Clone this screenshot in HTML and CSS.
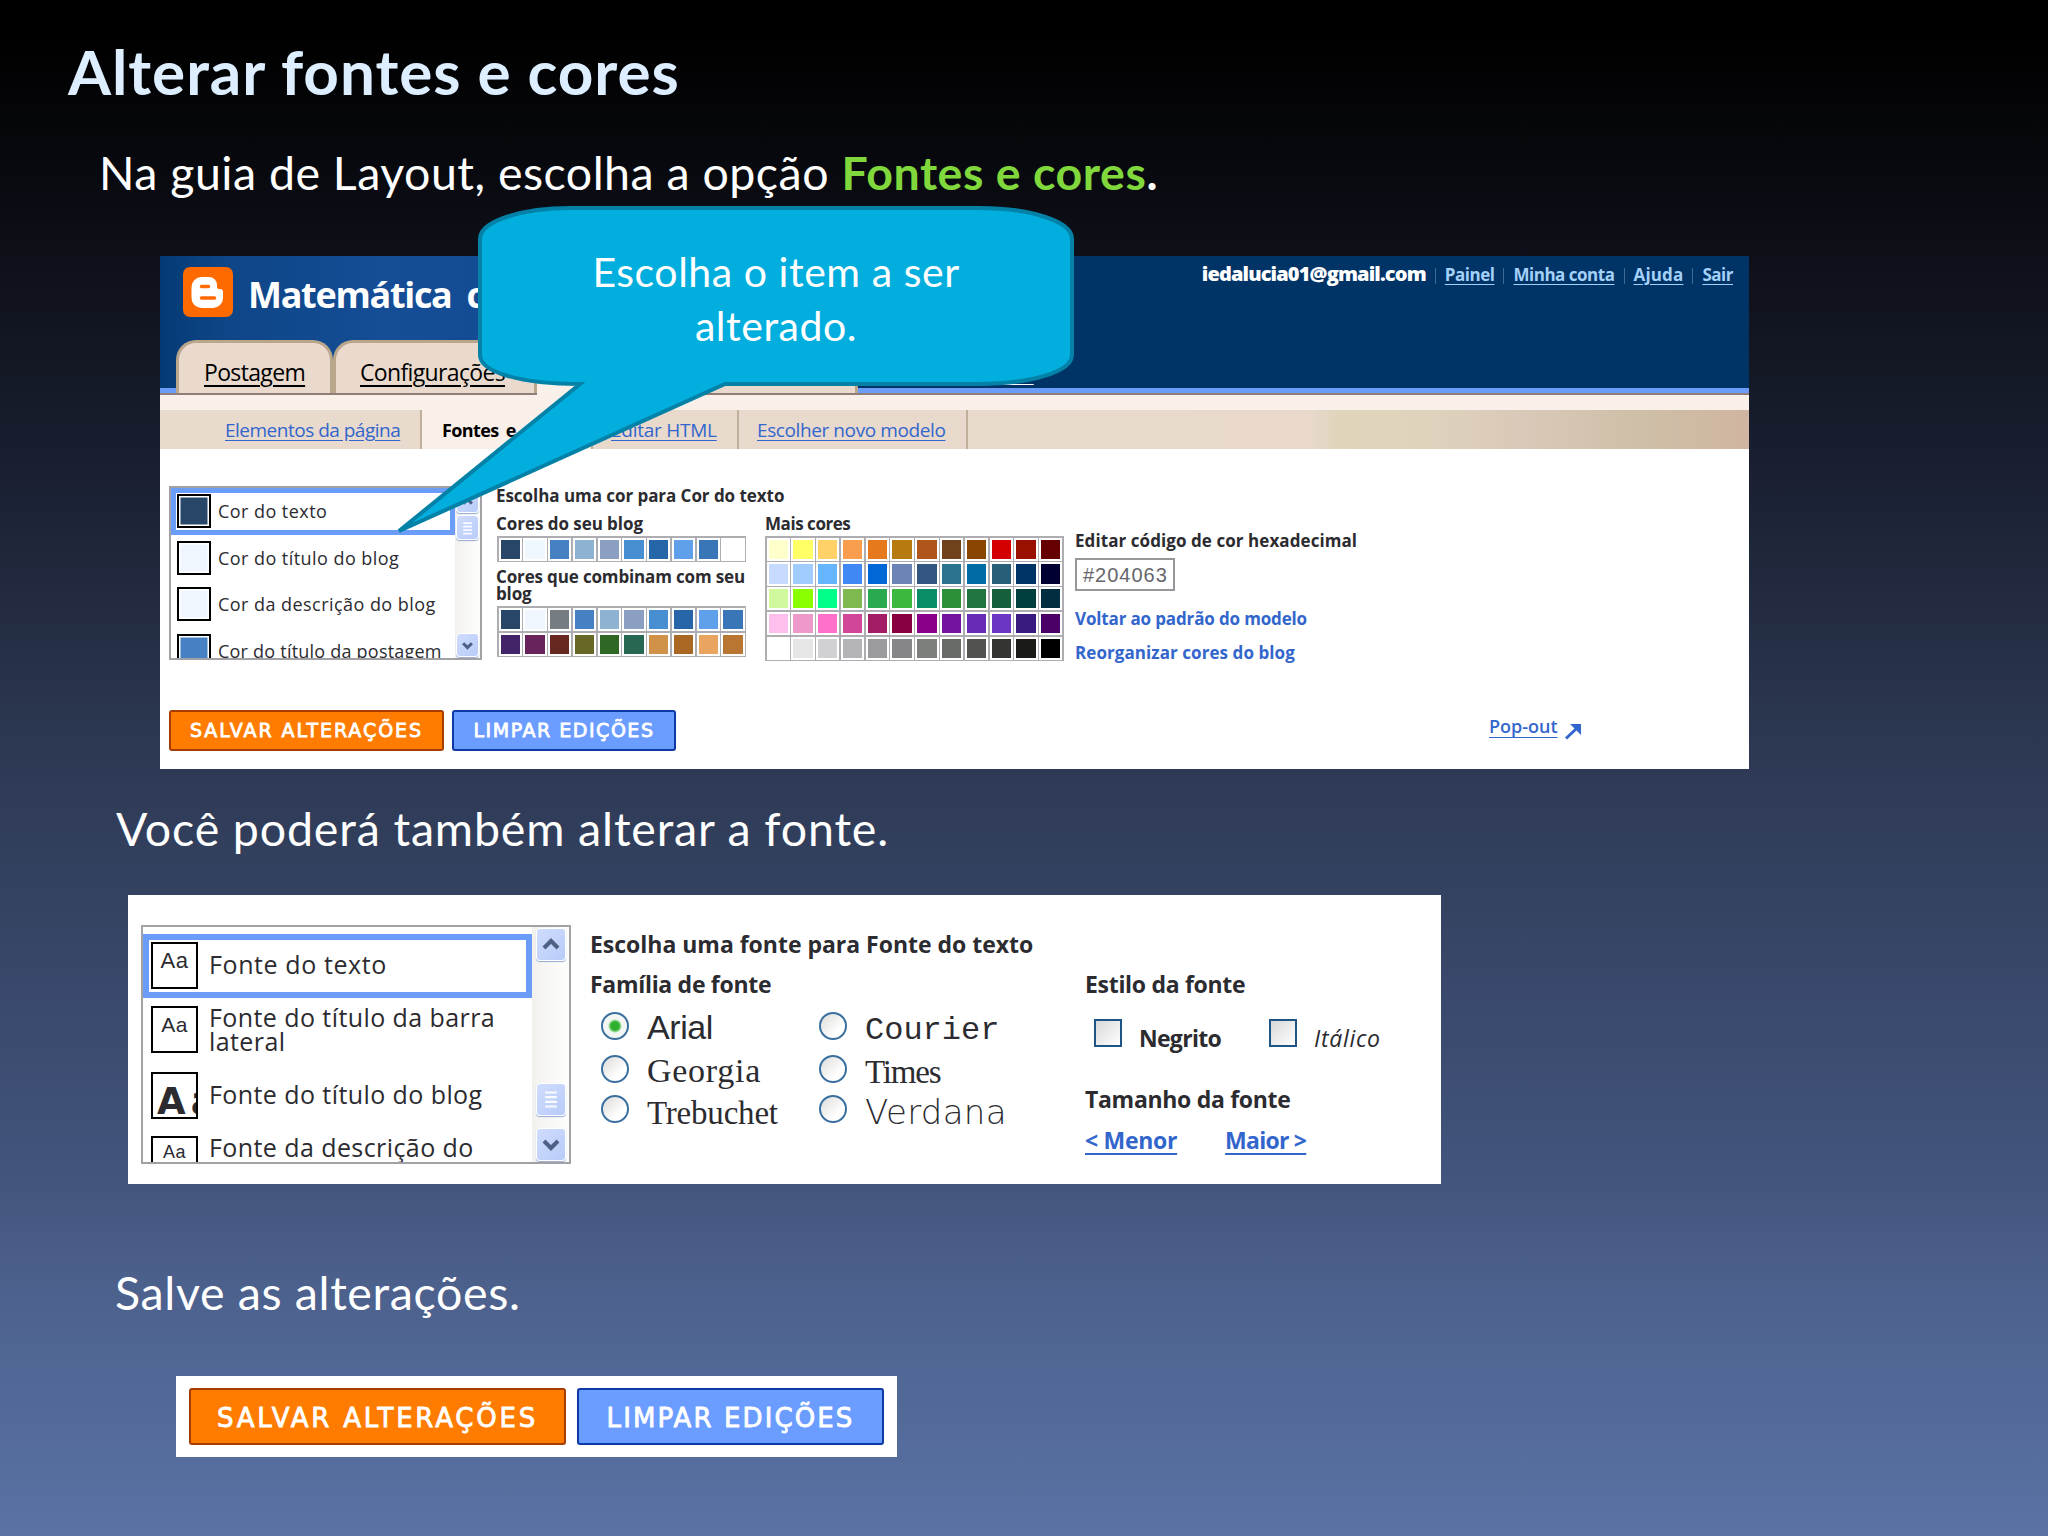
FILE: index.html
```html
<!DOCTYPE html>
<html lang="pt-BR">
<head>
<meta charset="utf-8">
<title>Alterar fontes e cores</title>
<link rel="stylesheet" href="styles.css">
</head>
<body>
<main class="slide">
  <h1 class="title">Alterar fontes e cores</h1>
  <p class="lead intro">Na guia de Layout, escolha a opção <b><em>Fontes e cores</em>.</b></p>

  <section class="panel blogger">
    <header class="top">
      <div class="brand-row">
        <svg class="logo" viewBox="0 0 50 50"><rect width="50" height="50" rx="7" fill="#ff6a00"/><path d="M18 10h8a8 8 0 0 1 8 8v2q0 2 3 2t3 3v6a10 10 0 0 1-10 10H18.500a10 10 0 0 1-10-10V20a10 10 0 0 1 10-10z" fill="#fff"/><path d="M18.500 19.500h7M18.500 31h13" stroke="#ff6a00" stroke-width="3.500" stroke-linecap="round"/></svg>
        <span class="blog-name">Matemática c</span>
        <nav class="user"><b>iedalucia01@gmail.com</b><i></i><a>Painel</a><i></i><a>Minha conta</a><i></i><a class="help">Ajuda</a><i></i><a>Sair</a></nav>
      </div>
      <nav class="tabs">
        <a class="tab t1">Postagem</a><a class="tab t2">Configurações</a><a class="tab active"></a><a class="tab t4"></a><a class="view">Visualizar</a>
      </nav>
    </header>
    <nav class="subnav">
      <a class="s1"><span>Elementos da página</span></a><a class="s2"><b>Fontes e cores</b></a><a class="s3"><span>Editar HTML</span></a><a class="s4"><span>Escolher novo modelo</span></a>
    </nav>
    <div class="editor">
      <div class="list colors">
        <ul>
          <li class="sel"><i class="sw navy"></i><span>Cor do texto</span></li>
          <li><i class="sw pale"></i><span>Cor do título do blog</span></li>
          <li><i class="sw pale"></i><span>Cor da descrição do blog</span></li>
          <li><i class="sw blue"></i><span>Cor do título da postagem</span></li>
        </ul>
        <div class="bar">
          <svg class="btn" viewBox="0 0 24 24"><path d="M7 15l5-5 5 5"/></svg>
          <svg class="btn thumb" viewBox="0 0 24 26"><path d="M7 8h10M7 12h10M7 16h10M7 20h10"/></svg>
          <svg class="btn down" viewBox="0 0 24 24"><path d="M7 10l5 5 5-5"/></svg>
        </div>
      </div>
      <div class="pick">
        <h2>Escolha uma cor para Cor do texto</h2>
        <div class="cols">
          <div class="mine">
            <h3>Cores do seu blog</h3>
            <div class="grid ten">
              <i style="background:#284668"></i><i style="background:#f0f8ff"></i><i style="background:#4581c3"></i><i style="background:#8eb2d2"></i><i style="background:#8b9fc3"></i><i style="background:#478fd1"></i><i style="background:#2666a8"></i><i style="background:#609fea"></i><i style="background:#3876b8"></i><i style="background:#fff"></i>
            </div>
            <h3 class="wrap">Cores que combinam com seu<br>blog</h3>
            <div class="grid ten">
              <i style="background:#284668"></i><i style="background:#f0f6ff"></i><i style="background:#757d83"></i><i style="background:#4581c3"></i><i style="background:#8eb2d2"></i><i style="background:#8b9fc3"></i><i style="background:#478fd1"></i><i style="background:#2666a8"></i><i style="background:#609fea"></i><i style="background:#3876b8"></i>
              <i style="background:#432469"></i><i style="background:#68245a"></i><i style="background:#672822"></i><i style="background:#686826"></i><i style="background:#2f6824"></i><i style="background:#286852"></i><i style="background:#d09148"></i><i style="background:#a86824"></i><i style="background:#e9a55f"></i><i style="background:#b87632"></i>
            </div>
          </div>
          <div class="more">
            <h3>Mais cores</h3>
            <div class="grid twelve">
              <i style="background:#ffffcc"></i><i style="background:#ffff66"></i><i style="background:#ffd166"></i><i style="background:#f99d4f"></i><i style="background:#e6781e"></i><i style="background:#b57b10"></i><i style="background:#b0561d"></i><i style="background:#70421c"></i><i style="background:#8a4500"></i><i style="background:#d40000"></i><i style="background:#990f00"></i><i style="background:#660000"></i>
              <i style="background:#c6dbff"></i><i style="background:#a0ccff"></i><i style="background:#66b5ff"></i><i style="background:#4088f3"></i><i style="background:#0068d6"></i><i style="background:#6c84b5"></i><i style="background:#335680"></i><i style="background:#2b738f"></i><i style="background:#006ba5"></i><i style="background:#285e77"></i><i style="background:#003366"></i><i style="background:#000033"></i>
              <i style="background:#cff99c"></i><i style="background:#8aff00"></i><i style="background:#00ff88"></i><i style="background:#80b850"></i><i style="background:#2aaa50"></i><i style="background:#3db83f"></i><i style="background:#0a8e68"></i><i style="background:#2d8f38"></i><i style="background:#20753f"></i><i style="background:#155f3d"></i><i style="background:#003f3d"></i><i style="background:#002e40"></i>
              <i style="background:#ffbfed"></i><i style="background:#ee99cc"></i><i style="background:#ff70ca"></i><i style="background:#d14698"></i><i style="background:#a21c66"></i><i style="background:#880040"></i><i style="background:#8a008a"></i><i style="background:#7513a1"></i><i style="background:#682bb5"></i><i style="background:#6b36c4"></i><i style="background:#391a80"></i><i style="background:#4a0066"></i>
              <i style="background:#ffffff"></i><i style="background:#e6e6e6"></i><i style="background:#d1d1d3"></i><i style="background:#b4b4b8"></i><i style="background:#9b9b9d"></i><i style="background:#868688"></i><i style="background:#7d7f7c"></i><i style="background:#686a68"></i><i style="background:#525350"></i><i style="background:#343532"></i><i style="background:#1a1b18"></i><i style="background:#000000"></i>
            </div>
          </div>
          <div class="hex">
            <h3>Editar código de cor hexadecimal</h3>
            <div class="field">#204063</div>
            <a class="back">Voltar ao padrão do modelo</a>
            <a class="shuffle">Reorganizar cores do blog</a>
          </div>
        </div>
      </div>
    </div>
    <footer class="actions">
      <a class="button save">SALVAR ALTERAÇÕES</a><a class="button clear">LIMPAR EDIÇÕES</a>
      <a class="popout">Pop-out<svg viewBox="0 0 18 17"><path d="M2 15.500L12 6" stroke="#36c" stroke-width="3" fill="none"/><path d="M6 1h11v11z" fill="#36c"/></svg></a>
    </footer>
  </section>

  <p class="lead second">Você poderá também alterar a fonte.</p>

  <section class="panel fonts">
    <div class="list faces">
      <ul>
        <li class="sel"><i class="aa">Aa</i><span>Fonte do texto</span></li>
        <li><i class="aa wide">Aa</i><span class="two">Fonte do título da barra<br>lateral</span></li>
        <li class="third"><i class="aa big">Aa</i><span>Fonte do título do blog</span></li>
        <li class="fourth"><i class="aa small">Aa</i><span class="two">Fonte da descrição do</span></li>
      </ul>
      <div class="bar">
        <svg class="btn" viewBox="0 0 24 26"><path d="M6 16l6-6 6 6"/></svg>
        <svg class="btn thumb" viewBox="0 0 24 26"><path d="M7 7h10M7 11h10M7 15h10M7 19h10"/></svg>
        <svg class="btn down" viewBox="0 0 24 26"><path d="M6 10l6 6 6-6"/></svg>
      </div>
    </div>
    <div class="options">
      <h2>Escolha uma fonte para Fonte do texto</h2>
      <div class="split">
        <div class="family">
          <h3>Família de fonte</h3>
          <div class="radios">
            <label><i class="radio on"></i><span class="arial">Arial</span></label><label><i class="radio"></i><span class="courier">Courier</span></label>
            <label><i class="radio"></i><span class="georgia">Georgia</span></label><label><i class="radio"></i><span class="times">Times</span></label>
            <label><i class="radio"></i><span class="treb">Trebuchet</span></label><label><i class="radio"></i><span class="verdana">Verdana</span></label>
          </div>
        </div>
        <div class="style">
          <h3>Estilo da fonte</h3>
          <div class="checks"><i class="check"></i><b>Negrito</b><i class="check"></i><em>Itálico</em></div>
          <h3 class="size">Tamanho da fonte</h3>
          <div class="sizes"><a>&lt; Menor</a><a>Maior &gt;</a></div>
        </div>
      </div>
    </div>
  </section>

  <p class="lead last">Salve as alterações.</p>

  <section class="panel save-bar">
    <a class="button save">SALVAR ALTERAÇÕES</a><a class="button clear">LIMPAR EDIÇÕES</a>
  </section>

  <div class="callout">
    <svg viewBox="0 0 690 340"><path d="M180 10H589C640 10 682 23 682 41V157C682 174 640 186 589 186H335L9 333L190 186C130 186 90 174 90 157V41C90 23 132 10 180 10Z" fill="#02aede" stroke="#0481a6" stroke-width="4" stroke-linejoin="miter"/></svg>
    <p>Escolha o item a ser<br>alterado.</p>
  </div>
</main>
</body>
</html>
```
FILE: styles.css
```css
* { box-sizing: border-box; }
body { margin: 0; }
h1, h2, h3, p, ul { margin: 0; padding: 0; font-weight: 700; }
li { list-style: none; }

.slide {
  position: relative; width: 2048px; height: 1536px; overflow: hidden;
  display: flex; flex-direction: column; align-items: flex-start;
  background: linear-gradient(#000 0, #000 40px, #0e1019 256px, #1c2336 512px, #2e3a55 769px, #43557e 1184px, #4c608c 1280px, #5973a4 1536px);
  font-family: "Open Sans", "Liberation Sans", sans-serif; color: #2b2b30;
}
.title { margin: 31px 0 0 68px; font: 700 62px/80px Lato, sans-serif; letter-spacing: .950px; color: #dceeff; white-space: nowrap; }
.lead { font: 400 46.500px/60px Lato, sans-serif; letter-spacing: .850px; color: #fff; white-space: nowrap; }
.intro { margin: 31px 0 0 99px; letter-spacing: .480px; }
.intro b { letter-spacing: .550px; }
.intro em { font-style: normal; color: #80d83c; }
.second { margin: 29px 0 0 116px; }
.last { margin: 78px 0 0 115px; letter-spacing: .650px; }
.panel { background: #fff; white-space: nowrap; }

.blogger { margin: 54px 0 0 160px; width: 1589px; height: 513px; }
.top {
  height: 139px; display: flex; flex-direction: column; justify-content: space-between;
  border-bottom: 2px solid #8f7e78;
  background: linear-gradient(#6b9cf7, #6b9cf7) bottom / 100% 5px no-repeat, linear-gradient(90deg, #053a74 0, #0d4586 60px, #154d96 220px, #134c94 330px, #036 700px);
}
.brand-row { display: flex; padding: 11px 16px 0 23px; }
.logo { width: 50px; height: 50px; }
.blog-name { margin-left: 15px; font-weight: 700; font-size: 36px; letter-spacing: -1.300px; word-spacing: 7px; line-height: 56px; color: #fff; }
.user { margin-left: auto; display: flex; font-size: 17px; letter-spacing: -.480px; line-height: 36px; height: 30px; margin-top: -10px; color: #a3d1f9; font-weight: 700; }
.user b { color: #fff; font-size: 20px; letter-spacing: -.860px; line-height: 34px; }
.user a { text-decoration: underline; text-underline-offset: 3px; }
.user .help { letter-spacing: .150px; }
.user i { width: 1px; height: 16px; margin: 11px 9px 0; background: #3d6a94; }
.tabs { display: flex; align-items: flex-end; height: 53px; padding-left: 16px; }
.tab { height: 53px; border: 3px solid #b9a68b; border-bottom: 0; border-radius: 20px 20px 0 0; background: #e9dacd; color: #000; font-size: 23px; letter-spacing: -.650px; line-height: 59px; text-decoration: underline; text-underline-offset: 4px; }
.t1 { width: 157px; padding-left: 25px; }
.t2 { width: 204px; padding-left: 24px; }
.tab.active { width: 165px; height: 55px; margin-bottom: -2px; background: #f9f0e9; border-color: #f9f0e9; }
.t4 { width: 156px; }
.view { margin-left: 96px; color: #fff; font-size: 18px; line-height: 20px; align-self: flex-start; margin-top: 23px; text-decoration: underline; text-underline-offset: 4px; }
.subnav { display: flex; height: 54px; border-top: 15px solid #f9f0e9; background: linear-gradient(90deg, #e8dacd 0, #e8d9cc 1150px, #e0d4bb 1180px, #dfd3bd 1270px, #d9c9b8 1360px, #cfbfa8 1480px, #d0b5a0 1589px); font-size: 19px; letter-spacing: -.500px; line-height: 40px; color: #36c; }
.subnav a { border-right: 2px solid #c0af9a; }
.subnav span { text-decoration: underline; text-underline-offset: 3px; }
.s1 { width: 262px; padding-left: 65px; }
.s2 { width: 171px; padding-left: 20px; background: #f9f0ea; color: #000; font-size: 18px; letter-spacing: -.600px; word-spacing: 3px; }
.s3 { width: 146px; padding-left: 18px; letter-spacing: -.250px; }
.s4 { width: 229px; padding-left: 18px; letter-spacing: -.400px; }

.editor { display: flex; padding: 37px 0 0 9px; }
.list { display: flex; border: 2px solid #a2a2a6; overflow: hidden; }
.colors { width: 313px; height: 174px; }
.list ul { flex: 1; font-weight: 400; }
.colors li { display: flex; height: 46.500px; padding: 6px 0 0 6px; font-size: 18px; letter-spacing: .450px; line-height: 34px; }
.colors li:last-child { letter-spacing: .220px; }
.colors .sel { box-shadow: inset 0 0 0 5px #6b9cf7; }
.sw { flex: none; width: 34px; height: 34px; margin-right: 7px; border: 2px solid #000; box-shadow: inset 0 0 0 1.500px #fff; }
.navy { background: #284668; }
.pale { background: #f0f6ff; }
.blue { background: #4581c3; }
.bar { flex: none; display: flex; flex-direction: column; align-items: center; width: 25px; background: linear-gradient(90deg, #f2f1ee, #fefefd); }
.btn { flex: none; width: 23px; height: 24px; margin-top: 1px; border: 1.500px solid #fff; border-radius: 4px; background: linear-gradient(135deg, #cfdcfd, #b8cbf8); box-shadow: 0 1px 1px #93a9d8; }
.btn path { fill: none; stroke: #4d6185; stroke-width: 3.500; }
.btn.thumb { height: 25px; margin-top: 2px; }
.btn.thumb path { stroke: #f8faff; stroke-width: 1.800; }
.btn.down { margin-top: auto; margin-bottom: 1px; }

.pick { margin-left: 14px; }
.pick h2, .pick h3 { font-size: 17px; letter-spacing: -.050px; line-height: 20px; }
.cols { display: flex; margin-top: 8px; height: 147px; }
.mine { width: 269px; padding-left: 1px; }
.mine h3 { margin-left: -1px; }
.more { width: 310px; }
.pick .more h3 { letter-spacing: -.450px; }
.grid { display: grid; gap: 1.500px; padding: 1.500px; margin-top: 2px; background: #adadb2; }
.grid i { border: 2px solid #fff; height: 23.300px; }
.ten { grid-template-columns: repeat(10, 1fr); width: 249px; }
.twelve { grid-template-columns: repeat(12, 1fr); width: 299px; }
.pick .wrap { margin-top: 6px; margin-bottom: 4px; line-height: 17px; letter-spacing: -.150px; }
.hex { padding-top: 16px; display: flex; flex-direction: column; align-items: flex-start; color: #36c; font-weight: 700; font-size: 17px; line-height: 20px; }
.pick .hex h3 { color: #2b2b30; letter-spacing: .070px; margin-top: 1px; }
.field { width: 100px; height: 33px; margin-top: 7px; padding-left: 6px; border: 2px solid #97979b; color: #66666c; font: 400 20px/30px "Liberation Sans", sans-serif; letter-spacing: 1px; }
.back { margin-top: 18px; letter-spacing: -.150px; }
.shuffle { margin-top: 14px; letter-spacing: .070px; }

.actions { display: flex; margin-top: 49px; padding-left: 9px; }
.button { display: block; border-radius: 3px; color: #fff; text-align: center; font-family: "DejaVu Sans", sans-serif; -webkit-text-stroke: .800px #fff; }
.save { background: #ff7c00; border: 2px solid #a63c00; }
.clear { background: #6b9cff; border: 2px solid #0e3aa5; }
.actions .button { height: 41px; font-size: 19px; line-height: 37px; }
.actions .save { width: 275px; letter-spacing: 1.950px; }
.actions .clear { width: 224px; margin-left: 8px; letter-spacing: 1.530px; }
.popout { margin-left: 813px; display: flex; color: #36c; font-weight: 600; font-size: 18px; line-height: 32px; text-decoration: underline; text-underline-offset: 4px; }
.popout svg { width: 18px; height: 17px; margin: 13px 0 0 6px; }

.fonts { margin: 37px 0 0 128px; width: 1313px; height: 289px; padding: 30px 0 0 13px; display: flex; }
.faces { width: 430px; height: 239px; }
.faces ul { padding-top: 7px; }
.faces li { display: flex; height: 64px; padding: 8px 0 0 8px; font-size: 25px; letter-spacing: .420px; line-height: 46px; }
.faces .sel { box-shadow: inset 0 0 0 6px #6b9cf7; letter-spacing: .600px; }
.faces li > span { margin-top: -1px; }
.faces .two { line-height: 24px; }
.faces .third { height: 66px; padding-top: 10px; }
.faces .fourth { padding-top: 8px; }
.aa { flex: none; width: 47px; height: 47px; margin-right: 11px; border: 2px solid #000; overflow: hidden; font: 400 22px/34px "Liberation Sans", sans-serif; text-align: center; }
.aa.wide { font-size: 21px; }
.aa.big { font: 700 37px/56px "DejaVu Sans", sans-serif; letter-spacing: 5px; text-align: left; padding-left: 4px; }
.aa.small { font-size: 18px; line-height: 28px; }
.faces .bar { width: 37px; }
.faces .btn { width: 30px; height: 33px; }
.faces .btn.thumb { margin-top: 122px; }

.options { margin-left: 19px; padding-top: 5px; }
.options h2, .options h3 { font-size: 23px; letter-spacing: -.300px; line-height: 28px; }
.options h2 { letter-spacing: -.020px; }
.split { display: flex; margin-top: 12px; }
.family { width: 495px; }
.radios { display: grid; grid-template-columns: 218px 1fr; grid-template-rows: 43px 40px 40px; margin-top: 8px; padding-left: 11px; }
.radios label { display: flex; }
.radios span { line-height: 40px; margin-left: 18px; }
.radio { flex: none; width: 28px; height: 28px; margin-top: 6px; border: 2.500px solid #3a6f9f; border-radius: 50%; background: linear-gradient(135deg, #dcdcda, #fff 70%); }
.radio.on { background: radial-gradient(circle, #2fae2f 0 4px, #5cc95c 5px, #f4f6f4 7px); }
.radios .arial { font-family: "Liberation Sans", sans-serif; font-size: 34px; letter-spacing: -.400px; margin-top: 1px; }
.radios .courier { font-family: "Liberation Mono", monospace; font-size: 32px; margin-top: 5px; }
.radios .georgia { font-family: "Liberation Serif", serif; font-size: 34px; letter-spacing: .730px; margin-top: 2px; }
.radios .times { font-family: "Liberation Serif", serif; font-size: 33px; letter-spacing: -1.200px; margin-top: 3px; }
.radios .treb { font-family: "Liberation Serif", serif; font-size: 33px; letter-spacing: -.200px; margin-top: 4px; }
.radios .verdana { font-family: "DejaVu Sans", sans-serif; font-weight: 200; font-size: 34px; letter-spacing: .300px; margin-top: 3px; }
.checks { display: flex; margin: 21px 0 0 9px; height: 60px; font-size: 23px; line-height: 38px; }
.check { width: 28px; height: 28px; border: 2px solid #1f5584; background: linear-gradient(135deg, #d9d8d8, #fff); }
.checks b { margin: 0 48px 0 17px; letter-spacing: -.710px; }
.checks em { margin-left: 17px; letter-spacing: .700px; }
.options .size { margin-top: 6px; }
.sizes { display: flex; margin-top: 10px; color: #36c; font-weight: 700; font-size: 23px; letter-spacing: -.300px; line-height: 34px; }
.sizes a { margin-right: 48px; text-decoration: underline; text-underline-offset: 4px; }
.sizes a + a { letter-spacing: -.750px; }

.save-bar { margin: 54px 0 0 176px; width: 721px; height: 81px; padding: 12px 13px; display: flex; gap: 11px; }
.save-bar .button { height: 57px; font-size: 26px; line-height: 56px; }
.save-bar .save { width: 377px; letter-spacing: 2.790px; }
.save-bar .clear { width: 307px; letter-spacing: 2.110px; }

.callout { position: absolute; left: 390px; top: 198px; width: 690px; height: 340px; }
.callout svg { position: absolute; inset: 0; }
.callout p { position: relative; padding: 47px 0 0 82px; width: 690px; text-align: center; color: #fff; font: 400 41px/54px Lato, sans-serif; letter-spacing: .550px; white-space: nowrap; }
```
